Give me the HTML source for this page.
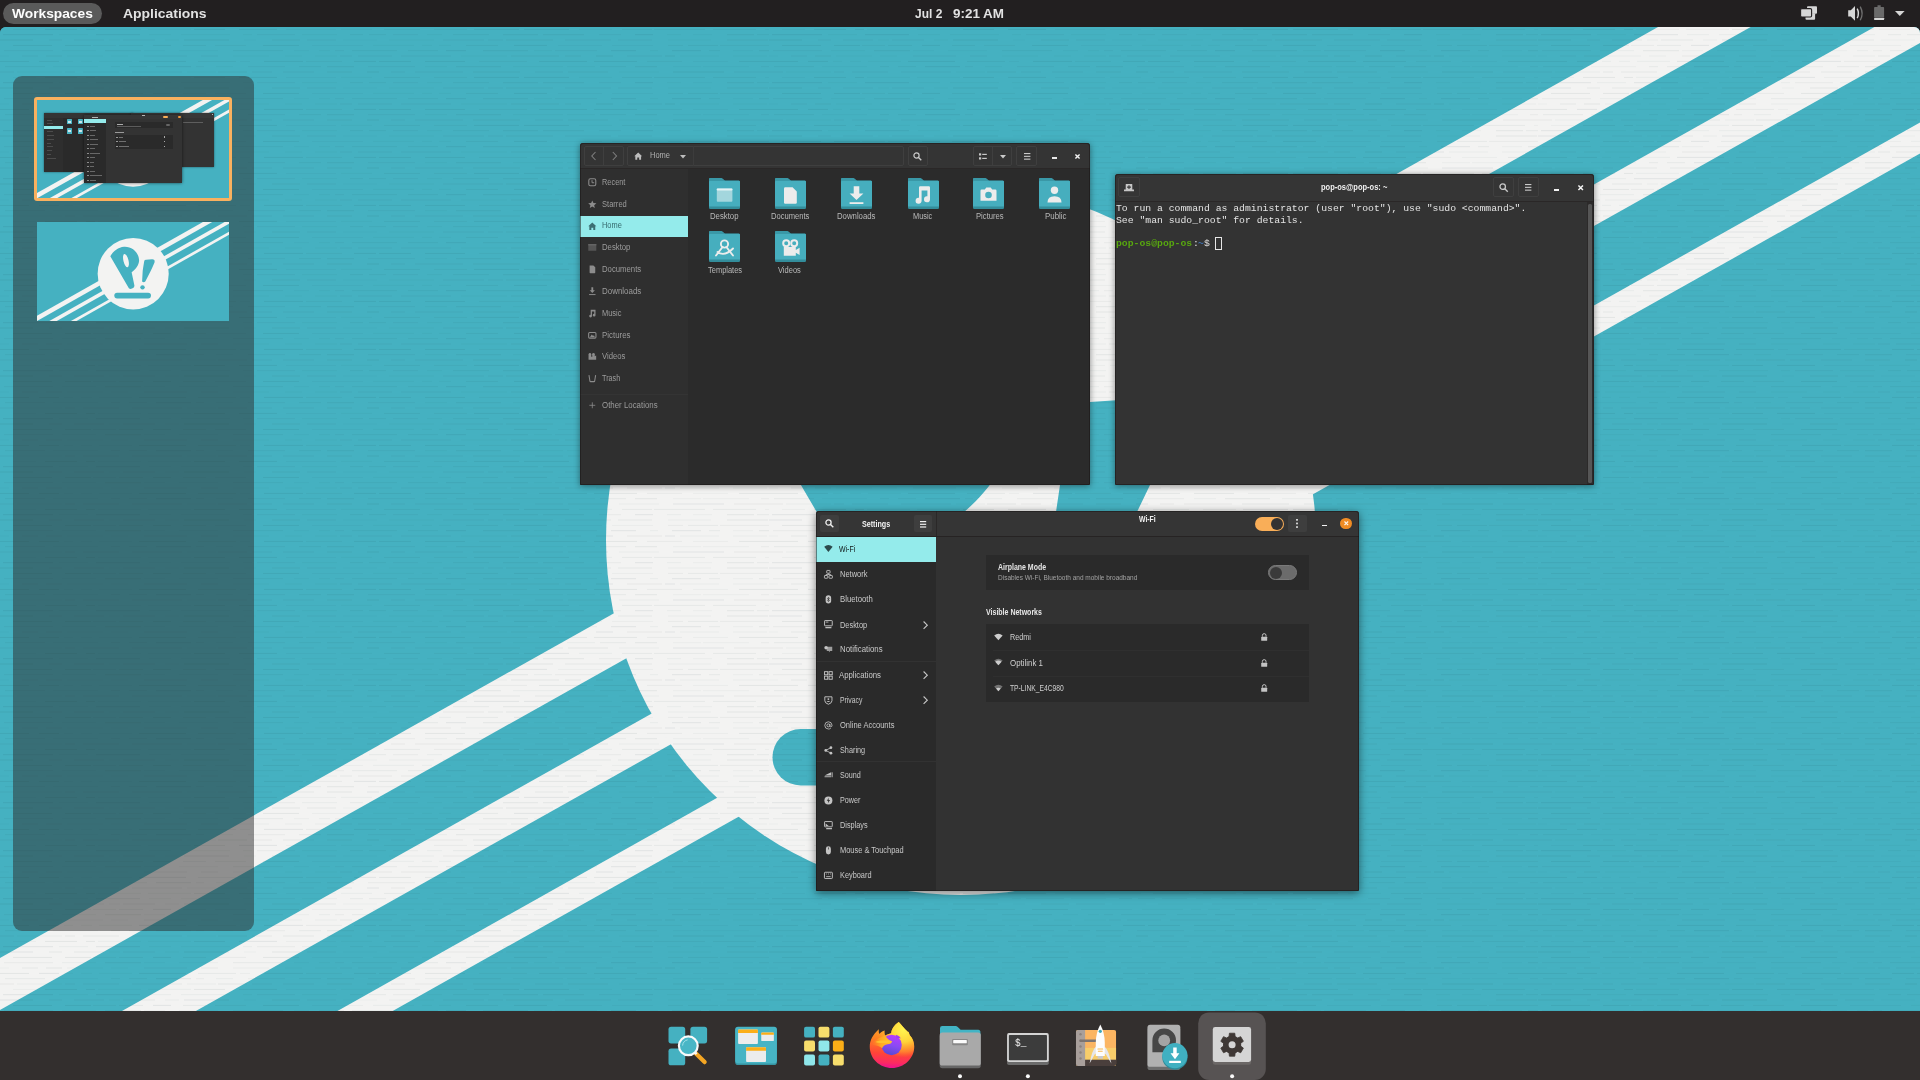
<!DOCTYPE html>
<html lang="en">
<head>
<meta charset="utf-8">
<title>Pop!_OS Workspaces Overview</title>
<style>
*{box-sizing:border-box;margin:0;padding:0}
html,body{width:1920px;height:1080px;overflow:hidden;background:#221f20;font-family:"Liberation Sans",sans-serif}
#root{will-change:transform;position:relative;width:1920px;height:1080px;overflow:hidden;background:#221f20}
.a{position:absolute}
.tx{position:absolute;white-space:pre;line-height:1;transform-origin:0 50%;display:block}
svg{display:block;overflow:visible}
#wall{position:absolute;left:0;top:27px;width:1920px;height:984px;border-radius:6px 6px 0 0;overflow:hidden;background:#45b1c1}
#wall>svg{position:absolute;left:0;top:-27px}
#topbar{position:absolute;left:0;top:0;width:1920px;height:27px}
#dock{position:absolute;left:0;top:1011px;width:1920px;height:69px;background:#332f2e}
.win{position:absolute;border-radius:3px 3px 1px 1px;box-shadow:0 1px 6px rgba(0,0,0,.45)}
.win::after{content:"";position:absolute;left:0;top:0;right:0;bottom:0;border:1px solid rgba(24,20,20,.5);border-radius:3px 3px 1px 1px}
.hb{position:absolute;left:0;top:0;width:100%;background:#343434;border-radius:3px 3px 0 0;border-bottom:1px solid #2a2727}
.btn{position:absolute;border:1px solid #3f3f3f;border-radius:2px}
.m{font-family:"Liberation Mono",monospace}
.b{font-weight:bold}

</style>
</head>
<body>
<div id="root">
<svg width="0" height="0" style="position:absolute">
<defs>
<pattern id="tex" width="769" height="48" patternUnits="userSpaceOnUse"><g fill="#0a2a30"><rect x="4" y="2.2" width="49" height="1" opacity="0.05"/><rect x="62" y="2.2" width="34" height="1" opacity="0.04"/><rect x="105" y="2.2" width="36" height="1" opacity="0.07"/><rect x="144" y="2.2" width="21" height="1" opacity="0.03"/><rect x="179" y="2.2" width="39" height="1" opacity="0.03"/><rect x="233" y="2.2" width="50" height="1" opacity="0.06"/><rect x="294" y="2.2" width="15" height="1" opacity="0.03"/><rect x="319" y="2.2" width="11" height="1" opacity="0.04"/><rect x="335" y="2.2" width="9" height="1" opacity="0.05"/><rect x="352" y="2.2" width="45" height="1" opacity="0.06"/><rect x="408" y="2.2" width="30" height="1" opacity="0.06"/><rect x="446" y="2.2" width="20" height="1" opacity="0.08"/><rect x="483" y="2.2" width="45" height="1" opacity="0.07"/><rect x="534" y="2.2" width="18" height="1" opacity="0.04"/><rect x="555" y="2.2" width="42" height="1" opacity="0.05"/><rect x="611" y="2.2" width="25" height="1" opacity="0.08"/><rect x="650" y="2.2" width="8" height="1" opacity="0.04"/><rect x="672" y="2.2" width="29" height="1" opacity="0.08"/><rect x="709" y="2.2" width="11" height="1" opacity="0.06"/><rect x="733" y="2.2" width="20" height="1" opacity="0.03"/><rect x="759" y="2.2" width="10" height="1" opacity="0.07"/><rect x="-3" y="7.5" width="12" height="1" opacity="0.03"/><rect x="22" y="7.5" width="16" height="1" opacity="0.06"/><rect x="46" y="7.5" width="16" height="1" opacity="0.07"/><rect x="67" y="7.5" width="36" height="1" opacity="0.04"/><rect x="111" y="7.5" width="17" height="1" opacity="0.04"/><rect x="144" y="7.5" width="43" height="1" opacity="0.05"/><rect x="201" y="7.5" width="17" height="1" opacity="0.05"/><rect x="233" y="7.5" width="36" height="1" opacity="0.04"/><rect x="285" y="7.5" width="17" height="1" opacity="0.04"/><rect x="315" y="7.5" width="22" height="1" opacity="0.04"/><rect x="340" y="7.5" width="12" height="1" opacity="0.06"/><rect x="358" y="7.5" width="34" height="1" opacity="0.05"/><rect x="401" y="7.5" width="50" height="1" opacity="0.05"/><rect x="461" y="7.5" width="46" height="1" opacity="0.04"/><rect x="511" y="7.5" width="48" height="1" opacity="0.07"/><rect x="565" y="7.5" width="16" height="1" opacity="0.07"/><rect x="596" y="7.5" width="17" height="1" opacity="0.08"/><rect x="627" y="7.5" width="35" height="1" opacity="0.05"/><rect x="665" y="7.5" width="10" height="1" opacity="0.08"/><rect x="680" y="7.5" width="39" height="1" opacity="0.04"/><rect x="733" y="7.5" width="34" height="1" opacity="0.04"/><rect x="-4" y="12.9" width="33" height="1" opacity="0.07"/><rect x="39" y="12.9" width="20" height="1" opacity="0.08"/><rect x="64" y="12.9" width="9" height="1" opacity="0.04"/><rect x="81" y="12.9" width="11" height="1" opacity="0.04"/><rect x="99" y="12.9" width="33" height="1" opacity="0.04"/><rect x="139" y="12.9" width="47" height="1" opacity="0.08"/><rect x="198" y="12.9" width="38" height="1" opacity="0.06"/><rect x="240" y="12.9" width="10" height="1" opacity="0.03"/><rect x="264" y="12.9" width="39" height="1" opacity="0.08"/><rect x="306" y="12.9" width="36" height="1" opacity="0.05"/><rect x="354" y="12.9" width="22" height="1" opacity="0.08"/><rect x="379" y="12.9" width="32" height="1" opacity="0.07"/><rect x="425" y="12.9" width="40" height="1" opacity="0.07"/><rect x="479" y="12.9" width="48" height="1" opacity="0.05"/><rect x="539" y="12.9" width="48" height="1" opacity="0.07"/><rect x="594" y="12.9" width="43" height="1" opacity="0.07"/><rect x="647" y="12.9" width="35" height="1" opacity="0.05"/><rect x="693" y="12.9" width="35" height="1" opacity="0.03"/><rect x="739" y="12.9" width="30" height="1" opacity="0.07"/><rect x="5" y="18.2" width="40" height="1" opacity="0.06"/><rect x="53" y="18.2" width="45" height="1" opacity="0.03"/><rect x="111" y="18.2" width="9" height="1" opacity="0.06"/><rect x="129" y="18.2" width="18" height="1" opacity="0.06"/><rect x="156" y="18.2" width="35" height="1" opacity="0.08"/><rect x="196" y="18.2" width="8" height="1" opacity="0.05"/><rect x="216" y="18.2" width="17" height="1" opacity="0.04"/><rect x="248" y="18.2" width="37" height="1" opacity="0.05"/><rect x="299" y="18.2" width="22" height="1" opacity="0.06"/><rect x="327" y="18.2" width="27" height="1" opacity="0.07"/><rect x="368" y="18.2" width="47" height="1" opacity="0.05"/><rect x="425" y="18.2" width="22" height="1" opacity="0.04"/><rect x="456" y="18.2" width="45" height="1" opacity="0.07"/><rect x="513" y="18.2" width="50" height="1" opacity="0.04"/><rect x="567" y="18.2" width="28" height="1" opacity="0.04"/><rect x="600" y="18.2" width="26" height="1" opacity="0.06"/><rect x="635" y="18.2" width="22" height="1" opacity="0.07"/><rect x="673" y="18.2" width="28" height="1" opacity="0.03"/><rect x="703" y="18.2" width="46" height="1" opacity="0.03"/><rect x="761" y="18.2" width="8" height="1" opacity="0.05"/><rect x="0" y="23.5" width="14" height="1" opacity="0.05"/><rect x="17" y="23.5" width="45" height="1" opacity="0.04"/><rect x="65" y="23.5" width="10" height="1" opacity="0.06"/><rect x="83" y="23.5" width="36" height="1" opacity="0.06"/><rect x="132" y="23.5" width="50" height="1" opacity="0.06"/><rect x="187" y="23.5" width="29" height="1" opacity="0.04"/><rect x="218" y="23.5" width="29" height="1" opacity="0.07"/><rect x="252" y="23.5" width="20" height="1" opacity="0.05"/><rect x="283" y="23.5" width="31" height="1" opacity="0.06"/><rect x="327" y="23.5" width="25" height="1" opacity="0.07"/><rect x="367" y="23.5" width="12" height="1" opacity="0.08"/><rect x="391" y="23.5" width="14" height="1" opacity="0.05"/><rect x="415" y="23.5" width="48" height="1" opacity="0.05"/><rect x="473" y="23.5" width="47" height="1" opacity="0.07"/><rect x="535" y="23.5" width="28" height="1" opacity="0.06"/><rect x="568" y="23.5" width="40" height="1" opacity="0.07"/><rect x="619" y="23.5" width="40" height="1" opacity="0.04"/><rect x="673" y="23.5" width="51" height="1" opacity="0.08"/><rect x="734" y="23.5" width="35" height="1" opacity="0.05"/><rect x="13" y="28.9" width="23" height="1" opacity="0.03"/><rect x="45" y="28.9" width="32" height="1" opacity="0.07"/><rect x="86" y="28.9" width="9" height="1" opacity="0.07"/><rect x="98" y="28.9" width="43" height="1" opacity="0.04"/><rect x="148" y="28.9" width="43" height="1" opacity="0.04"/><rect x="194" y="28.9" width="31" height="1" opacity="0.07"/><rect x="239" y="28.9" width="38" height="1" opacity="0.08"/><rect x="286" y="28.9" width="50" height="1" opacity="0.03"/><rect x="341" y="28.9" width="31" height="1" opacity="0.04"/><rect x="384" y="28.9" width="36" height="1" opacity="0.06"/><rect x="434" y="28.9" width="33" height="1" opacity="0.05"/><rect x="474" y="28.9" width="45" height="1" opacity="0.08"/><rect x="524" y="28.9" width="45" height="1" opacity="0.08"/><rect x="579" y="28.9" width="33" height="1" opacity="0.04"/><rect x="622" y="28.9" width="30" height="1" opacity="0.06"/><rect x="654" y="28.9" width="51" height="1" opacity="0.06"/><rect x="713" y="28.9" width="43" height="1" opacity="0.06"/><rect x="765" y="28.9" width="4" height="1" opacity="0.03"/><rect x="3" y="34.2" width="50" height="1" opacity="0.08"/><rect x="59" y="34.2" width="29" height="1" opacity="0.04"/><rect x="96" y="34.2" width="44" height="1" opacity="0.08"/><rect x="149" y="34.2" width="22" height="1" opacity="0.04"/><rect x="181" y="34.2" width="49" height="1" opacity="0.04"/><rect x="243" y="34.2" width="9" height="1" opacity="0.04"/><rect x="257" y="34.2" width="38" height="1" opacity="0.05"/><rect x="302" y="34.2" width="35" height="1" opacity="0.04"/><rect x="350" y="34.2" width="13" height="1" opacity="0.06"/><rect x="369" y="34.2" width="17" height="1" opacity="0.06"/><rect x="393" y="34.2" width="25" height="1" opacity="0.05"/><rect x="427" y="34.2" width="15" height="1" opacity="0.04"/><rect x="453" y="34.2" width="36" height="1" opacity="0.06"/><rect x="503" y="34.2" width="35" height="1" opacity="0.07"/><rect x="543" y="34.2" width="41" height="1" opacity="0.07"/><rect x="599" y="34.2" width="22" height="1" opacity="0.05"/><rect x="635" y="34.2" width="18" height="1" opacity="0.08"/><rect x="667" y="34.2" width="14" height="1" opacity="0.04"/><rect x="693" y="34.2" width="19" height="1" opacity="0.03"/><rect x="727" y="34.2" width="27" height="1" opacity="0.07"/><rect x="757" y="34.2" width="12" height="1" opacity="0.06"/><rect x="-5" y="39.5" width="38" height="1" opacity="0.08"/><rect x="49" y="39.5" width="13" height="1" opacity="0.06"/><rect x="74" y="39.5" width="30" height="1" opacity="0.06"/><rect x="109" y="39.5" width="11" height="1" opacity="0.04"/><rect x="123" y="39.5" width="32" height="1" opacity="0.06"/><rect x="165" y="39.5" width="14" height="1" opacity="0.04"/><rect x="184" y="39.5" width="45" height="1" opacity="0.08"/><rect x="244" y="39.5" width="12" height="1" opacity="0.03"/><rect x="272" y="39.5" width="28" height="1" opacity="0.07"/><rect x="307" y="39.5" width="29" height="1" opacity="0.06"/><rect x="343" y="39.5" width="34" height="1" opacity="0.03"/><rect x="389" y="39.5" width="45" height="1" opacity="0.04"/><rect x="443" y="39.5" width="41" height="1" opacity="0.05"/><rect x="488" y="39.5" width="15" height="1" opacity="0.06"/><rect x="506" y="39.5" width="47" height="1" opacity="0.07"/><rect x="565" y="39.5" width="46" height="1" opacity="0.06"/><rect x="618" y="39.5" width="34" height="1" opacity="0.06"/><rect x="668" y="39.5" width="43" height="1" opacity="0.04"/><rect x="727" y="39.5" width="41" height="1" opacity="0.07"/><rect x="13" y="44.9" width="39" height="1" opacity="0.07"/><rect x="65" y="44.9" width="26" height="1" opacity="0.07"/><rect x="93" y="44.9" width="23" height="1" opacity="0.05"/><rect x="119" y="44.9" width="24" height="1" opacity="0.06"/><rect x="153" y="44.9" width="18" height="1" opacity="0.08"/><rect x="183" y="44.9" width="23" height="1" opacity="0.06"/><rect x="215" y="44.9" width="31" height="1" opacity="0.05"/><rect x="263" y="44.9" width="36" height="1" opacity="0.07"/><rect x="312" y="44.9" width="51" height="1" opacity="0.03"/><rect x="373" y="44.9" width="41" height="1" opacity="0.04"/><rect x="422" y="44.9" width="10" height="1" opacity="0.04"/><rect x="439" y="44.9" width="12" height="1" opacity="0.04"/><rect x="466" y="44.9" width="32" height="1" opacity="0.06"/><rect x="514" y="44.9" width="33" height="1" opacity="0.08"/><rect x="558" y="44.9" width="44" height="1" opacity="0.03"/><rect x="612" y="44.9" width="41" height="1" opacity="0.03"/><rect x="668" y="44.9" width="15" height="1" opacity="0.05"/><rect x="688" y="44.9" width="30" height="1" opacity="0.06"/><rect x="720" y="44.9" width="49" height="1" opacity="0.05"/></g></pattern>
<symbol id="wp" viewBox="0 0 1920 1080" preserveAspectRatio="none">
<rect x="0" y="0" width="1920" height="1080" fill="#45b1c1"/>
<g fill="#f3f3f2">
<polygon points="-20.0,969.2 1940.0,-131.3 1940.0,-79.3 -20.0,1021.2"/>
<polygon points="-20.0,1090.7 1940.0,-9.8 1940.0,31.7 -20.0,1132.2"/>
<polygon points="-20.0,1211.7 1940.0,111.2 1940.0,142.2 -20.0,1242.7"/>
<circle cx="961" cy="540" r="355"/>
</g>
<g fill="#45b1c1">
<g transform="translate(961,540) scale(1.2034) translate(-938,-570)">
<path d="M748,427 C770,385 815,352 862,348 C930,344 985,395 987,462 C986,500 955,540 925,558 L948,668 C951,690 915,705 902,690 Z"/>
<ellipse cx="878" cy="462" rx="21" ry="56" transform="rotate(-14 878 462)" fill="#f3f3f2"/>
</g>
<path d="M1071,416 Q1073,402 1090,402 L1150,398 Q1182,398 1174,428 L1150,485 L1137,512 L1082,618 Q1066,634 1050,618 L1056,512 L1060,485 Z"/>
<circle cx="1054" cy="676" r="22"/>
<rect x="772.5" y="729" width="366" height="56.5" rx="28.25"/>
</g>
</symbol>
</defs>
</svg>
<div id="wall"><svg width="1920" height="1080" viewBox="0 0 1920 1080"><use href="#wp" x="0" y="0" width="1920" height="1080"/><rect x="0" y="0" width="1920" height="1080" fill="url(#tex)"/></svg></div>
<div id="topbar">
<div class="a" style="left:3px;top:3px;width:99px;height:21px;border-radius:10.5px;background:#5a5a5a"></div>
<span class="tx b" id="t0" style="left:12.00px;top:7px;font-size:13.6px;color:#fdfdfd;transform:scaleX(1.0120);">Workspaces</span>
<span class="tx b" id="t1" style="left:123.20px;top:7px;font-size:13.6px;color:#e2e2e2;transform:scaleX(1.0248);">Applications</span>
<span class="tx b" id="t2" style="left:914.80px;top:7px;font-size:13.6px;color:#e2e2e2;transform:scaleX(0.8811);">Jul 2</span>
<span class="tx b" id="t3" style="left:953.20px;top:7px;font-size:13.6px;color:#e2e2e2;transform:scaleX(0.9879);">9:21 AM</span>
<svg class="a" style="left:1800px;top:4px" width="110" height="20" viewBox="0 0 110 20">
<g fill="#d6d6d6">
<!-- screens -->
<rect x="7" y="2.2" width="10" height="7.6" rx="1"/>
<rect x="5.5" y="9.2" width="9.6" height="6.6" rx="1"/>
<rect x="0.6" y="4.6" width="11" height="8.4" rx="1.2" stroke="#221f20" stroke-width="1.1"/>
<!-- speaker -->
<path d="M48.2,6.3 h2.6 l4.2,-4.3 v14.8 l-4.2,-4.3 h-2.6 z"/>
<path d="M56.6,5 q2.2,4.4 0,8.8 l1.2,0.7 q2.7,-5.1 0,-10.2 z"/>
<path d="M59.6,2.9 q3.6,6.5 0,13 l1.2,0.7 q4.1,-7.2 0,-14.4 z" fill="#6f6f6f"/>
<!-- battery -->
<path d="M77.5,1.3 h3.2 v1.6 h2.6 q0.8,0 0.8,0.8 v9.6 h-10 v-9.6 q0,-0.8 0.8,-0.8 h2.6 z" fill="#6a6a6a"/>
<rect x="74.100" y="13.800" width="10" height="2.200" rx="0.4"/>
<!-- arrow -->
<path d="M95,7 h9.600 l-4.800,5 z"/>
</g>
</svg>
</div>
<div class="a" style="left:12.5px;top:75.5px;width:241px;height:855px;border-radius:9px;background:rgba(43,43,43,.5)"></div>
<div class="a" style="left:34px;top:97px;width:198px;height:104px;border-radius:3px;background:#f9b15f"></div>
<div class="a" style="left:37px;top:100px;width:192px;height:98.400px;overflow:hidden"><svg class="a" style="left:0px;top:0px" width="192" height="98.4" viewBox="0 27 1920 984" preserveAspectRatio="none"><use href="#wp" x="0" y="0" width="1920" height="1080"/></svg></div>
<div class="a" style="left:0;top:0;width:260px;height:210px"><div class="a" style="left:44.1px;top:113.0px;width:89.1px;height:59.3px;background:#2a2a2a;box-shadow:0 0 2px rgba(0,0,0,.5)"></div><div class="a" style="left:44.1px;top:113.0px;width:89.1px;height:4.6px;background:#343434;"></div><div class="a" style="left:44.1px;top:117.6px;width:18.9px;height:54.7px;background:#2e2e2e;"></div><div class="a" style="left:44.1px;top:125.7px;width:18.9px;height:3.3px;background:#94ebeb;"></div><div class="a" style="left:66.6px;top:119.2px;width:5.4px;height:5.3px;background:#49b3c3;border-radius:0.5px"></div><div class="a" style="left:68.0px;top:120.8px;width:2.6px;height:2.6px;background:#cfe9ed;"></div><div class="a" style="left:66.6px;top:128.3px;width:5.4px;height:5.3px;background:#49b3c3;border-radius:0.5px"></div><div class="a" style="left:68.0px;top:129.9px;width:2.6px;height:2.6px;background:#cfe9ed;"></div><div class="a" style="left:78.0px;top:119.2px;width:5.4px;height:5.3px;background:#49b3c3;border-radius:0.5px"></div><div class="a" style="left:79.4px;top:120.8px;width:2.6px;height:2.6px;background:#cfe9ed;"></div><div class="a" style="left:78.0px;top:128.3px;width:5.4px;height:5.3px;background:#49b3c3;border-radius:0.5px"></div><div class="a" style="left:79.4px;top:129.9px;width:2.6px;height:2.6px;background:#cfe9ed;"></div><div class="a" style="left:47.0px;top:119.6px;width:5.0px;height:0.9px;background:#4c4c4c;"></div><div class="a" style="left:47.0px;top:123.4px;width:5.5px;height:0.9px;background:#4c4c4c;"></div><div class="a" style="left:47.0px;top:131.2px;width:6.0px;height:0.9px;background:#4c4c4c;"></div><div class="a" style="left:47.0px;top:135.0px;width:7.0px;height:0.9px;background:#4c4c4c;"></div><div class="a" style="left:47.0px;top:138.8px;width:7.0px;height:0.9px;background:#4c4c4c;"></div><div class="a" style="left:47.0px;top:142.6px;width:4.0px;height:0.9px;background:#4c4c4c;"></div><div class="a" style="left:47.0px;top:146.4px;width:5.5px;height:0.9px;background:#4c4c4c;"></div><div class="a" style="left:47.0px;top:150.2px;width:5.0px;height:0.9px;background:#4c4c4c;"></div><div class="a" style="left:47.0px;top:154.0px;width:4.0px;height:0.9px;background:#4c4c4c;"></div><div class="a" style="left:47.0px;top:158.4px;width:9.0px;height:0.9px;background:#4c4c4c;"></div><div class="a" style="left:130.8px;top:113.0px;width:83.6px;height:54.0px;background:#333;box-shadow:0 0 2px rgba(0,0,0,.5)"></div><div class="a" style="left:130.8px;top:113.0px;width:83.6px;height:4.8px;background:#383838;"></div><div class="a" style="left:183.0px;top:121.8px;width:20.0px;height:1.0px;background:#5e5e5e;"></div><div class="a" style="left:211.5px;top:113.5px;width:0.8px;height:1.1px;background:#bbb;"></div><div class="a" style="left:84.2px;top:114.9px;width:97.8px;height:67.8px;background:#333;box-shadow:0 0 3px rgba(0,0,0,.6)"></div><div class="a" style="left:84.2px;top:114.9px;width:97.8px;height:4.4px;background:#363636;"></div><div class="a" style="left:84.2px;top:119.3px;width:21.6px;height:63.4px;background:#2a2a2a;"></div><div class="a" style="left:84.2px;top:119.3px;width:21.6px;height:4.2px;background:#94ebeb;"></div><div class="a" style="left:92.0px;top:116.6px;width:5.5px;height:1.1px;background:#b5b5b5;"></div><div class="a" style="left:141.5px;top:115.3px;width:3.5px;height:1.0px;background:#b5b5b5;"></div><div class="a" style="left:163.4px;top:115.7px;width:5.0px;height:2.6px;background:#f9ae58;border-radius:1.3px"></div><div class="a" style="left:178.4px;top:115.6px;width:2.6px;height:2.6px;background:#f39b3c;border-radius:1.3px"></div><div class="a" style="left:114.8px;top:122.1px;width:58.0px;height:6.2px;background:#2a2a2a;"></div><div class="a" style="left:116.8px;top:124.0px;width:6.7px;height:1.0px;background:#aaa;"></div><div class="a" style="left:116.8px;top:126.0px;width:24.2px;height:0.7px;background:#5c5c5c;"></div><div class="a" style="left:166.0px;top:124.0px;width:3.6px;height:2.4px;background:#666;border-radius:1.2px"></div><div class="a" style="left:114.8px;top:132.0px;width:9.7px;height:1.0px;background:#9a9a9a;"></div><div class="a" style="left:114.8px;top:134.7px;width:58.0px;height:14.2px;background:#2a2a2a;"></div><div class="a" style="left:116.4px;top:136.6px;width:1.6px;height:1.0px;background:#999;"></div><div class="a" style="left:119.4px;top:136.6px;width:4.0px;height:1.0px;background:#707070;"></div><div class="a" style="left:164.0px;top:136.4px;width:1.4px;height:1.4px;background:#aaa;"></div><div class="a" style="left:116.4px;top:141.2px;width:1.6px;height:1.0px;background:#999;"></div><div class="a" style="left:119.4px;top:141.2px;width:6.5px;height:1.0px;background:#707070;"></div><div class="a" style="left:164.0px;top:141.0px;width:1.4px;height:1.4px;background:#aaa;"></div><div class="a" style="left:116.4px;top:145.8px;width:1.6px;height:1.0px;background:#999;"></div><div class="a" style="left:119.4px;top:145.8px;width:10.0px;height:1.0px;background:#707070;"></div><div class="a" style="left:164.0px;top:145.6px;width:1.4px;height:1.4px;background:#aaa;"></div><div class="a" style="left:87.3px;top:125.5px;width:1.5px;height:1.2px;background:#8c8c8c;"></div><div class="a" style="left:90.0px;top:125.5px;width:5.0px;height:1.1px;background:#686868;"></div><div class="a" style="left:87.3px;top:130.0px;width:1.5px;height:1.2px;background:#8c8c8c;"></div><div class="a" style="left:90.0px;top:130.0px;width:6.0px;height:1.1px;background:#686868;"></div><div class="a" style="left:87.3px;top:134.5px;width:1.5px;height:1.2px;background:#8c8c8c;"></div><div class="a" style="left:90.0px;top:134.5px;width:5.0px;height:1.1px;background:#686868;"></div><div class="a" style="left:87.3px;top:139.0px;width:1.5px;height:1.2px;background:#8c8c8c;"></div><div class="a" style="left:90.0px;top:139.0px;width:8.0px;height:1.1px;background:#686868;"></div><div class="a" style="left:87.3px;top:143.5px;width:1.5px;height:1.2px;background:#8c8c8c;"></div><div class="a" style="left:90.0px;top:143.5px;width:8.0px;height:1.1px;background:#686868;"></div><div class="a" style="left:87.3px;top:148.0px;width:1.5px;height:1.2px;background:#8c8c8c;"></div><div class="a" style="left:90.0px;top:148.0px;width:4.5px;height:1.1px;background:#686868;"></div><div class="a" style="left:87.3px;top:152.5px;width:1.5px;height:1.2px;background:#8c8c8c;"></div><div class="a" style="left:90.0px;top:152.5px;width:10.0px;height:1.1px;background:#686868;"></div><div class="a" style="left:87.3px;top:157.0px;width:1.5px;height:1.2px;background:#8c8c8c;"></div><div class="a" style="left:90.0px;top:157.0px;width:5.0px;height:1.1px;background:#686868;"></div><div class="a" style="left:87.3px;top:161.5px;width:1.5px;height:1.2px;background:#8c8c8c;"></div><div class="a" style="left:90.0px;top:161.5px;width:4.0px;height:1.1px;background:#686868;"></div><div class="a" style="left:87.3px;top:166.0px;width:1.5px;height:1.2px;background:#8c8c8c;"></div><div class="a" style="left:90.0px;top:166.0px;width:4.0px;height:1.1px;background:#686868;"></div><div class="a" style="left:87.3px;top:170.5px;width:1.5px;height:1.2px;background:#8c8c8c;"></div><div class="a" style="left:90.0px;top:170.5px;width:5.0px;height:1.1px;background:#686868;"></div><div class="a" style="left:87.3px;top:175.0px;width:1.5px;height:1.2px;background:#8c8c8c;"></div><div class="a" style="left:90.0px;top:175.0px;width:11.5px;height:1.1px;background:#686868;"></div><div class="a" style="left:87.3px;top:179.5px;width:1.5px;height:1.2px;background:#8c8c8c;"></div><div class="a" style="left:90.0px;top:179.5px;width:6.0px;height:1.1px;background:#686868;"></div></div>
<div class="a" style="left:36.800px;top:221.800px;width:192.200px;height:99.100px;overflow:hidden"><svg class="a" style="left:0px;top:0px" width="192.2" height="99.1" viewBox="0 27 1920 984" preserveAspectRatio="none"><use href="#wp" x="0" y="0" width="1920" height="1080"/></svg></div>
<div class="win" id="files" style="left:580px;top:143px;width:510.400px;height:342.200px;background:#2b2b2b">
<div class="hb" style="height:25.800px"></div>
<div class="btn" style="left:3.6px;top:3.300px;width:40.400px;height:19.500px"></div>
<div class="a" style="left:23.3px;top:3.300px;width:1px;height:19.500px;background:#3f3f3f"></div>
<svg class="a" style="left:9.0px;top:8px" width="30" height="10" viewBox="0 0 30 10"><path d="M6.500,1 L2.800,5 L6.500,9 M23.800,1 L27.500,5 L23.800,9" fill="none" stroke="#7e7e7e" stroke-width="1.100"/></svg>
<div class="btn" style="left:47.2px;top:3.300px;width:276.500px;height:19.500px"></div>
<div class="a" style="left:112.5px;top:3.300px;width:1px;height:19.500px;background:#3c3c3c"></div>
<svg class="a" style="left:53.60px;top:8.80px" width="8.4" height="8.4" viewBox="0 0 16 16"><path d="M8,1 L15.500,8 H13.500 V15 H9.800 V10.500 H6.200 V15 H2.500 V8 H0.500 Z" fill="#bdbdbd"/></svg>
<span class="tx" id="t23" style="left:70.10px;top:8px;font-size:8.3px;color:#b2b2b2;transform:scaleX(0.9033);">Home</span>
<svg class="a" style="left:100.0px;top:12.0px" width="6" height="3.500" viewBox="0 0 6 3.500"><path d="M0,0 H6 L3,3.500 Z" fill="#bdbdbd"/></svg>
<div class="btn" style="left:327.5px;top:3.300px;width:20.200px;height:19.500px"></div>
<svg class="a" style="left:332.6px;top:8.6px" width="9" height="9" viewBox="0 0 9 9"><circle cx="3.500" cy="3.500" r="2.600" fill="none" stroke="#c9c9c9" stroke-width="1.200"/><path d="M5.500,5.500 L8.300,8.300" stroke="#c9c9c9" stroke-width="1.300"/></svg>
<div class="btn" style="left:393.1px;top:3.300px;width:39.400px;height:19.500px"></div>
<div class="a" style="left:412.4px;top:3.300px;width:1px;height:19.500px;background:#3f3f3f"></div>
<svg class="a" style="left:398.8px;top:9.8px" width="8" height="7" viewBox="0 0 8 7"><g fill="#c9c9c9"><rect x="0" y="0.300" width="2.200" height="2.200"/><rect x="3.200" y="0.800" width="4.600" height="1.200"/><rect x="0" y="4.300" width="2.200" height="2.200"/><rect x="3.200" y="4.800" width="4.600" height="1.200"/></g></svg>
<svg class="a" style="left:419.8px;top:12.0px" width="6" height="3.500" viewBox="0 0 6 3.500"><path d="M0,0 H6 L3,3.500 Z" fill="#c9c9c9"/></svg>
<div class="btn" style="left:436.3px;top:3.300px;width:20.300px;height:19.500px"></div>
<svg class="a" style="left:443.6px;top:9.9px" width="6.400" height="7" viewBox="0 0 6.400 7"><g fill="#c9c9c9"><rect x="0" y="0" width="6.400" height="1.100"/><rect x="0" y="2.800" width="6.400" height="1.100"/><rect x="0" y="5.600" width="6.400" height="1.100"/></g></svg>
<div class="a" style="left:471.9px;top:13.7px;width:4.800px;height:2px;background:#e8e8e8"></div>
<svg class="a" style="left:494.7px;top:11.0px" width="5" height="5" viewBox="0 0 5 5"><path d="M0.400,0.400 L4.600,4.600 M4.600,0.400 L0.400,4.600" stroke="#f2f2f2" stroke-width="1.400"/></svg>

<div class="a" style="left:0;top:25.800px;width:108px;height:316.400px;background:#2f2f2f;border-radius:0 0 0 1px"></div>
<div class="a" style="left:0;top:251.0px;width:108px;height:1px;background:#343434"></div>
<svg class="a" style="left:8.30px;top:35.10px" width="8.6" height="8.6" viewBox="0 0 16 16"><rect x="1.500" y="1.500" width="13" height="13" rx="3" fill="none" stroke="#8c8c8c" stroke-width="2"/><path d="M7.500,4 v4.800 h4" fill="none" stroke="#8c8c8c" stroke-width="1.800"/></svg><span class="tx" id="t4" style="left:21.80px;top:35px;font-size:8.3px;color:#9c9c9c;transform:scaleX(0.8898);">Recent</span><svg class="a" style="left:8.30px;top:56.80px" width="8.6" height="8.6" viewBox="0 0 16 16"><path d="M8,0.800 L10.200,5.700 L15.600,6.200 L11.500,9.800 L12.700,15.100 L8,12.300 L3.300,15.100 L4.500,9.800 L0.400,6.200 L5.800,5.700 Z" fill="#8c8c8c"/></svg><span class="tx" id="t5" style="left:21.80px;top:57px;font-size:8.3px;color:#9c9c9c;transform:scaleX(0.9111);">Starred</span><div class="a" style="left:0;top:73.0px;width:108px;height:21.200px;background:#94ebeb"></div><svg class="a" style="left:8.30px;top:78.50px" width="8.6" height="8.6" viewBox="0 0 16 16"><path d="M8,1 L15.500,8 H13.500 V15 H9.800 V10.500 H6.200 V15 H2.500 V8 H0.500 Z" fill="#3c6f73"/></svg><span class="tx" id="t6" style="left:21.80px;top:78px;font-size:8.3px;color:#34686c;transform:scaleX(0.8943);">Home</span><svg class="a" style="left:8.30px;top:100.20px" width="8.6" height="8.6" viewBox="0 0 16 16"><rect x="0.500" y="2" width="15" height="12.500" rx="1" fill="#555"/><rect x="0.500" y="2" width="15" height="2.500" fill="#666"/></svg><span class="tx" id="t7" style="left:21.80px;top:100px;font-size:8.3px;color:#9c9c9c;transform:scaleX(0.9331);">Desktop</span><svg class="a" style="left:8.30px;top:121.90px" width="8.6" height="8.6" viewBox="0 0 16 16"><path d="M3,0.800 H10 L13.500,4.300 V14 Q13.500,15.200 12.300,15.200 H4.200 Q3,15.200 3,14 Z" fill="#8c8c8c"/></svg><span class="tx" id="t8" style="left:21.80px;top:122px;font-size:8.3px;color:#9c9c9c;transform:scaleX(0.9340);">Documents</span><svg class="a" style="left:8.30px;top:143.80px" width="8.6" height="8.6" viewBox="0 0 16 16"><path d="M6.300,0.500 H9.700 V6 H12.800 L8,11 L3.200,6 H6.300 Z" fill="#8c8c8c"/><rect x="2" y="13.200" width="12" height="1.800" fill="#8c8c8c"/></svg><span class="tx" id="t9" style="left:21.80px;top:144px;font-size:8.3px;color:#9c9c9c;transform:scaleX(0.9571);">Downloads</span><svg class="a" style="left:8.30px;top:166.40px" width="8.6" height="8.6" viewBox="0 0 16 16"><path d="M5,1.500 H14 V11.500 A2.600,2.600 0 1 1 11.600,9 V4.500 H7.400 V13 A2.600,2.600 0 1 1 5,10.500 Z" fill="#8c8c8c"/></svg><span class="tx" id="t10" style="left:21.80px;top:166px;font-size:8.3px;color:#9c9c9c;transform:scaleX(0.8952);">Music</span><svg class="a" style="left:8.30px;top:187.90px" width="8.6" height="8.6" viewBox="0 0 16 16"><rect x="1.200" y="2.700" width="13.600" height="10.600" rx="2" fill="none" stroke="#8c8c8c" stroke-width="2"/><path d="M3.500,11.500 L7,6.500 L9.500,9.500 L11,8 L12.800,11.500 Z" fill="#8c8c8c"/></svg><span class="tx" id="t11" style="left:21.80px;top:188px;font-size:8.3px;color:#9c9c9c;transform:scaleX(0.9505);">Pictures</span><svg class="a" style="left:8.30px;top:209.10px" width="8.6" height="8.6" viewBox="0 0 16 16"><path d="M1,5 H6 V9 H8 V5 H12.500 V8 L15.200,6.500 V14.500 H1 Z" fill="#8c8c8c"/><circle cx="3.600" cy="4.300" r="2.400" fill="#8c8c8c"/><circle cx="10.200" cy="4.300" r="2.400" fill="#8c8c8c"/></svg><span class="tx" id="t12" style="left:21.80px;top:209px;font-size:8.3px;color:#9c9c9c;transform:scaleX(0.9279);">Videos</span><svg class="a" style="left:8.30px;top:230.90px" width="8.6" height="8.6" viewBox="0 0 16 16"><path d="M1.800,2 L3.600,13.200 Q3.800,14.200 4.800,14.200 H11.200 Q12.200,14.200 12.400,13.200 L14.200,2" fill="none" stroke="#8c8c8c" stroke-width="1.900"/></svg><span class="tx" id="t13" style="left:21.80px;top:231px;font-size:8.3px;color:#9c9c9c;transform:scaleX(0.8753);">Trash</span><svg class="a" style="left:8.30px;top:258.10px" width="8.6" height="8.6" viewBox="0 0 16 16"><path d="M8,2.500 V13.500 M2.500,8 H13.500" stroke="#8c8c8c" stroke-width="1.500" fill="none"/></svg><span class="tx" id="t14" style="left:21.80px;top:258px;font-size:8.3px;color:#9c9c9c;transform:scaleX(0.9492);">Other Locations</span>
<svg class="a" style="left:129.00px;top:34.90px" width="31" height="31" viewBox="0 0 31 31">
<path d="M0,1 Q0,0 1,0 H12 Q13,0 13.800,0.700 L16,2.800 H30 Q31,2.800 31,3.800 V10 H0 Z" fill="#3a98a7"/>
<rect x="0" y="2.800" width="31" height="28.200" rx="1.200" fill="#338d9b"/>
<path d="M0,4 Q0,2.800 1.200,2.800 H29.800 Q31,2.800 31,4 V28.400 H0 Z" fill="#46aebe"/>
<path d="M0,4 Q0,2.800 1.200,2.800 H12 L13.800,0.700 V2.800 Z" fill="#3a98a7" opacity="0"/>
<path d="M0.300,0.300 H12.600 L15.600,2.900 H0.300 Z" fill="#3a98a7"/>
<rect x="7.800" y="10.400" width="15.600" height="13.300" rx="0.800" fill="#a3d6dd"/><rect x="7.800" y="10.400" width="15.600" height="2" rx="0.600" fill="#e4f3f5"/>
</svg><span class="tx" id="t15" style="left:129.70px;top:69px;font-size:8.3px;color:#b9b9b9;transform:scaleX(0.9363);">Desktop</span><svg class="a" style="left:195.10px;top:34.90px" width="31" height="31" viewBox="0 0 31 31">
<path d="M0,1 Q0,0 1,0 H12 Q13,0 13.800,0.700 L16,2.800 H30 Q31,2.800 31,3.800 V10 H0 Z" fill="#3a98a7"/>
<rect x="0" y="2.800" width="31" height="28.200" rx="1.200" fill="#338d9b"/>
<path d="M0,4 Q0,2.800 1.200,2.800 H29.800 Q31,2.800 31,4 V28.400 H0 Z" fill="#46aebe"/>
<path d="M0,4 Q0,2.800 1.200,2.800 H12 L13.800,0.700 V2.800 Z" fill="#3a98a7" opacity="0"/>
<path d="M0.300,0.300 H12.600 L15.600,2.900 H0.300 Z" fill="#3a98a7"/>
<path d="M9,10.400 Q9,9.200 10.200,9.200 H17.600 L21.800,13.400 V24.600 Q21.800,25.800 20.600,25.800 H10.200 Q9,25.800 9,24.600 Z" fill="#ececec"/>
</svg><span class="tx" id="t16" style="left:190.80px;top:69px;font-size:8.3px;color:#b9b9b9;transform:scaleX(0.9150);">Documents</span><svg class="a" style="left:260.90px;top:34.90px" width="31" height="31" viewBox="0 0 31 31">
<path d="M0,1 Q0,0 1,0 H12 Q13,0 13.800,0.700 L16,2.800 H30 Q31,2.800 31,3.800 V10 H0 Z" fill="#3a98a7"/>
<rect x="0" y="2.800" width="31" height="28.200" rx="1.200" fill="#338d9b"/>
<path d="M0,4 Q0,2.800 1.200,2.800 H29.800 Q31,2.800 31,4 V28.400 H0 Z" fill="#46aebe"/>
<path d="M0,4 Q0,2.800 1.200,2.800 H12 L13.800,0.700 V2.800 Z" fill="#3a98a7" opacity="0"/>
<path d="M0.300,0.300 H12.600 L15.600,2.900 H0.300 Z" fill="#3a98a7"/>
<path d="M12.700,8.300 H18.300 V15.600 H22.400 L15.500,22 L8.600,15.600 H12.700 Z" fill="#ececec"/><rect x="8.600" y="24.200" width="13.800" height="1.800" fill="#ececec"/>
</svg><span class="tx" id="t17" style="left:256.70px;top:69px;font-size:8.3px;color:#b9b9b9;transform:scaleX(0.9376);">Downloads</span><svg class="a" style="left:327.50px;top:34.90px" width="31" height="31" viewBox="0 0 31 31">
<path d="M0,1 Q0,0 1,0 H12 Q13,0 13.800,0.700 L16,2.800 H30 Q31,2.800 31,3.800 V10 H0 Z" fill="#3a98a7"/>
<rect x="0" y="2.800" width="31" height="28.200" rx="1.200" fill="#338d9b"/>
<path d="M0,4 Q0,2.800 1.200,2.800 H29.800 Q31,2.800 31,4 V28.400 H0 Z" fill="#46aebe"/>
<path d="M0,4 Q0,2.800 1.200,2.800 H12 L13.800,0.700 V2.800 Z" fill="#3a98a7" opacity="0"/>
<path d="M0.300,0.300 H12.600 L15.600,2.900 H0.300 Z" fill="#3a98a7"/>
<path d="M11,9.400 Q11,8.200 12.200,8.200 H20.800 Q22,8.200 22,9.400 V21.200 A3,3 0 1 1 19.400,18.300 V12.400 H13.600 V22.600 A3,3 0 1 1 11,19.700 Z" fill="#ececec"/>
</svg><span class="tx" id="t18" style="left:332.50px;top:69px;font-size:8.3px;color:#b9b9b9;transform:scaleX(0.8906);">Music</span><svg class="a" style="left:393.10px;top:34.90px" width="31" height="31" viewBox="0 0 31 31">
<path d="M0,1 Q0,0 1,0 H12 Q13,0 13.800,0.700 L16,2.800 H30 Q31,2.800 31,3.800 V10 H0 Z" fill="#3a98a7"/>
<rect x="0" y="2.800" width="31" height="28.200" rx="1.200" fill="#338d9b"/>
<path d="M0,4 Q0,2.800 1.200,2.800 H29.800 Q31,2.800 31,4 V28.400 H0 Z" fill="#46aebe"/>
<path d="M0,4 Q0,2.800 1.200,2.800 H12 L13.800,0.700 V2.800 Z" fill="#3a98a7" opacity="0"/>
<path d="M0.300,0.300 H12.600 L15.600,2.900 H0.300 Z" fill="#3a98a7"/>
<path d="M7.500,12.800 Q7.500,11.600 8.700,11.600 H11.800 L13.300,9.600 H17.700 L19.200,11.600 H22.300 Q23.500,11.600 23.500,12.800 V22.800 H7.500 Z" fill="#ececec"/><circle cx="15.500" cy="17" r="3.300" fill="#46aebe"/>
</svg><span class="tx" id="t19" style="left:395.60px;top:69px;font-size:8.3px;color:#b9b9b9;transform:scaleX(0.9238);">Pictures</span><svg class="a" style="left:459.30px;top:34.90px" width="31" height="31" viewBox="0 0 31 31">
<path d="M0,1 Q0,0 1,0 H12 Q13,0 13.800,0.700 L16,2.800 H30 Q31,2.800 31,3.800 V10 H0 Z" fill="#3a98a7"/>
<rect x="0" y="2.800" width="31" height="28.200" rx="1.200" fill="#338d9b"/>
<path d="M0,4 Q0,2.800 1.200,2.800 H29.800 Q31,2.800 31,4 V28.400 H0 Z" fill="#46aebe"/>
<path d="M0,4 Q0,2.800 1.200,2.800 H12 L13.800,0.700 V2.800 Z" fill="#3a98a7" opacity="0"/>
<path d="M0.300,0.300 H12.600 L15.600,2.900 H0.300 Z" fill="#3a98a7"/>
<circle cx="15.500" cy="12.200" r="3.700" fill="#ececec"/><path d="M8.500,24.600 Q8.500,18.200 15.500,18.200 Q22.500,18.200 22.500,24.600 Z" fill="#ececec"/>
</svg><span class="tx" id="t20" style="left:464.50px;top:69px;font-size:8.3px;color:#b9b9b9;transform:scaleX(0.9509);">Public</span><svg class="a" style="left:129.00px;top:88.10px" width="31" height="31" viewBox="0 0 31 31">
<path d="M0,1 Q0,0 1,0 H12 Q13,0 13.800,0.700 L16,2.800 H30 Q31,2.800 31,3.800 V10 H0 Z" fill="#3a98a7"/>
<rect x="0" y="2.800" width="31" height="28.200" rx="1.200" fill="#338d9b"/>
<path d="M0,4 Q0,2.800 1.200,2.800 H29.800 Q31,2.800 31,4 V28.400 H0 Z" fill="#46aebe"/>
<path d="M0,4 Q0,2.800 1.200,2.800 H12 L13.800,0.700 V2.800 Z" fill="#3a98a7" opacity="0"/>
<path d="M0.300,0.300 H12.600 L15.600,2.900 H0.300 Z" fill="#3a98a7"/>
<circle cx="15.500" cy="13" r="3.600" fill="none" stroke="#ececec" stroke-width="1.900"/><path d="M13.600,16 L7,24.500 M17.400,16 L24,24.500 M8.500,21 Q15.500,26 24,17.500" fill="none" stroke="#ececec" stroke-width="1.900" stroke-linecap="round"/>
</svg><span class="tx" id="t21" style="left:127.90px;top:123px;font-size:8.3px;color:#b9b9b9;transform:scaleX(0.9014);">Templates</span><svg class="a" style="left:195.10px;top:88.10px" width="31" height="31" viewBox="0 0 31 31">
<path d="M0,1 Q0,0 1,0 H12 Q13,0 13.800,0.700 L16,2.800 H30 Q31,2.800 31,3.800 V10 H0 Z" fill="#3a98a7"/>
<rect x="0" y="2.800" width="31" height="28.200" rx="1.200" fill="#338d9b"/>
<path d="M0,4 Q0,2.800 1.200,2.800 H29.800 Q31,2.800 31,4 V28.400 H0 Z" fill="#46aebe"/>
<path d="M0,4 Q0,2.800 1.200,2.800 H12 L13.800,0.700 V2.800 Z" fill="#3a98a7" opacity="0"/>
<path d="M0.300,0.300 H12.600 L15.600,2.900 H0.300 Z" fill="#3a98a7"/>
<circle cx="11.200" cy="12.200" r="3" fill="none" stroke="#ececec" stroke-width="2"/><circle cx="19.200" cy="12.200" r="3" fill="none" stroke="#ececec" stroke-width="2"/><path d="M8.800,16 H20.800 V19 L24.600,16.800 V24 L20.800,21.800 V24.800 H8.800 Z" fill="#ececec"/>
</svg><span class="tx" id="t22" style="left:198.40px;top:123px;font-size:8.3px;color:#b9b9b9;transform:scaleX(0.9041);">Videos</span>
</div>
<div class="win" id="term" style="left:1115px;top:174px;width:478.800px;height:311.300px;background:#333333;">
<div class="hb" style="height:27.600px;background:#353535"></div>
<div class="btn" style="left:3.3px;top:3px;width:21.300px;height:20.200px"></div>
<svg class="a" style="left:9.2px;top:10.2px" width="10" height="7.200" viewBox="0 0 10 7.200"><path d="M1.700,0.300 Q1.700,0 2,0 H8 Q8.300,0 8.300,0.300 V5.600 H10 V7.200 H0 V5.600 H1.700 Z" fill="#c6c6c6"/><path d="M5,1.200 V5 M3.100,3.100 H6.900" stroke="#353535" stroke-width="1.100"/></svg>
<span class="tx b" id="t30" style="left:205.80px;top:9px;font-size:9px;color:#f0f0f0;transform:scaleX(0.8338);">pop-os@pop-os: ~</span>
<div class="btn" style="left:378.1px;top:3px;width:20.900px;height:20.200px"></div>
<svg class="a" style="left:384.0px;top:9.0px" width="9.500" height="9.500" viewBox="0 0 9 9"><circle cx="3.500" cy="3.500" r="2.600" fill="none" stroke="#c9c9c9" stroke-width="1.200"/><path d="M5.500,5.500 L8.300,8.300" stroke="#c9c9c9" stroke-width="1.300"/></svg>
<div class="btn" style="left:403.0px;top:3px;width:20.800px;height:20.200px"></div>
<svg class="a" style="left:410.2px;top:10.2px" width="6.400" height="7" viewBox="0 0 6.400 7"><g fill="#c9c9c9"><rect x="0" y="0" width="6.400" height="1.100"/><rect x="0" y="2.800" width="6.400" height="1.100"/><rect x="0" y="5.600" width="6.400" height="1.100"/></g></svg>
<div class="a" style="left:438.8px;top:14.5px;width:5.500px;height:2px;background:#f2f2f2"></div>
<svg class="a" style="left:462.8px;top:11.0px" width="5.400" height="5.400" viewBox="0 0 5 5"><path d="M0.400,0.400 L4.600,4.600 M4.600,0.400 L0.400,4.600" stroke="#f6f6f6" stroke-width="1.400"/></svg>
<span class="tx m" id="t24" style="left:1.30px;top:30px;font-size:9.77px;color:#e4e4e4;transform:scaleX(1.0003);">To run a command as administrator (user "root"), use "sudo &lt;command&gt;".</span><span class="tx m" id="t25" style="left:1.30px;top:42px;font-size:9.77px;color:#e4e4e4;transform:scaleX(1.0003);">See "man sudo_root" for details.</span><span class="tx m b" id="t26" style="left:1.30px;top:65px;font-size:9.77px;color:#58a80f;transform:scaleX(1.0002);">pop-os@pop-os</span><span class="tx m" id="t27" style="left:77.51px;top:65px;font-size:9.77px;color:#e4e4e4;transform:scaleX(0.9978);">:</span><span class="tx m b" id="t28" style="left:83.37px;top:65px;font-size:9.77px;color:#3f74b8;transform:scaleX(0.9978);">~</span><span class="tx m" id="t29" style="left:89.23px;top:65px;font-size:9.77px;color:#e4e4e4;transform:scaleX(0.9978);">$</span>
<div class="a" style="left:100.0px;top:63.2px;width:7px;height:12.800px;border:1px solid #e6e6e6"></div>
<div class="a" style="left:472.3px;top:28.200px;width:5.500px;height:282.500px;background:#2c2a2a"></div>
<div class="a" style="left:473.4px;top:29.500px;width:3.500px;height:279px;background:#565656;border-radius:1.500px"></div>
</div>
<div class="win" id="settings" style="left:816px;top:511px;width:542.600px;height:380.300px;background:#323232;box-shadow:0 2px 9px rgba(0,0,0,.5)">
<div class="hb" style="height:26px;background:#353535;border-bottom:1px solid #262323"></div>
<div class="a" style="left:120px;top:0;width:1px;height:25px;background:#2a2828"></div>
<div class="a" style="left:0;top:26px;width:120px;height:354.300px;background:#2a2a2a;border-radius:0 0 0 1px"></div>
<div class="a" style="left:3.8px;top:4.0px;width:19.200px;height:17.200px;background:#3e3e3e;border-radius:2px"></div>
<svg class="a" style="left:9.0px;top:8.3px" width="9" height="9" viewBox="0 0 9 9"><circle cx="3.500" cy="3.500" r="2.600" fill="none" stroke="#f0f0f0" stroke-width="1.300"/><path d="M5.500,5.500 L8.300,8.300" stroke="#f0f0f0" stroke-width="1.400"/></svg>
<span class="tx b" id="t48" style="left:45.80px;top:9px;font-size:8.8px;color:#f2f2f2;transform:scaleX(0.8126);">Settings</span>
<div class="a" style="left:97.7px;top:4.0px;width:18.500px;height:17.200px;background:#3e3e3e;border-radius:2px"></div>
<svg class="a" style="left:103.8px;top:9.5px" width="6.200" height="6.600" viewBox="0 0 6.200 6.600"><g fill="#f0f0f0"><rect x="0" y="0" width="6.200" height="1.200"/><rect x="0" y="2.700" width="6.200" height="1.200"/><rect x="0" y="5.400" width="6.200" height="1.200"/></g></svg>
<div class="a" style="left:0;top:26.2px;width:120px;height:25px;background:#94ebeb"></div><svg class="a" style="left:7.80px;top:33.40px" width="8.8" height="8.8" viewBox="0 0 16 16"><path d="M8,14.500 L0.300,5 Q8,-1.500 15.700,5 Z" fill="#2c4a4c"/></svg><span class="tx" id="t31" style="left:23.30px;top:34px;font-size:8.4px;color:#0e1414;transform:scaleX(0.8294);">Wi-Fi</span><svg class="a" style="left:7.80px;top:58.70px" width="8.8" height="8.8" viewBox="0 0 16 16"><rect x="5" y="0.800" width="6" height="5" rx="0.800" fill="none" stroke="#c4c4c4" stroke-width="1.600"/><rect x="0.800" y="10" width="6" height="5" rx="0.800" fill="none" stroke="#c4c4c4" stroke-width="1.600"/><rect x="9.200" y="10" width="6" height="5" rx="0.800" fill="none" stroke="#c4c4c4" stroke-width="1.600"/><path d="M8,6 V8.200 M3.800,10 V8.200 H12.200 V10" fill="none" stroke="#c4c4c4" stroke-width="1.400"/></svg><span class="tx" id="t32" style="left:23.70px;top:59px;font-size:8.4px;color:#c9c9c9;transform:scaleX(0.8952);">Network</span><svg class="a" style="left:7.80px;top:83.60px" width="8.8" height="8.8" viewBox="0 0 16 16"><rect x="3" y="0.500" width="10" height="15" rx="5" fill="#c4c4c4"/><path d="M5.800,5.500 L10,10 L8,12 V4 L10,6 L5.800,10.500" fill="none" stroke="#2a2a2a" stroke-width="1.100"/></svg><span class="tx" id="t33" style="left:23.70px;top:84px;font-size:8.4px;color:#c9c9c9;transform:scaleX(0.9240);">Bluetooth</span><svg class="a" style="left:7.80px;top:109.40px" width="8.8" height="8.8" viewBox="0 0 16 16"><rect x="1" y="1" width="14" height="9.600" rx="1" fill="none" stroke="#c4c4c4" stroke-width="1.700"/><rect x="3" y="3" width="5" height="1.500" fill="#c4c4c4"/><rect x="2.500" y="12.800" width="11" height="2.200" fill="#c4c4c4"/></svg><span class="tx" id="t34" style="left:23.70px;top:110px;font-size:8.4px;color:#c9c9c9;transform:scaleX(0.8817);">Desktop</span><svg class="a" style="left:106.6px;top:110.0px" width="5" height="8.400" viewBox="0 0 5 8.400"><path d="M0.600,0.500 L4.300,4.200 L0.600,7.900" fill="none" stroke="#c8c8c8" stroke-width="1.100"/></svg><svg class="a" style="left:7.80px;top:134.10px" width="8.8" height="8.8" viewBox="0 0 16 16"><path d="M5,3 H15 V11 H11 L9,13.500 V11 H5 Z" fill="#c4c4c4" opacity=".75"/><circle cx="3.800" cy="5.200" r="3.200" fill="#c4c4c4"/></svg><span class="tx" id="t35" style="left:23.70px;top:134px;font-size:8.4px;color:#c9c9c9;transform:scaleX(0.9337);">Notifications</span><svg class="a" style="left:7.80px;top:159.60px" width="8.8" height="8.8" viewBox="0 0 16 16"><rect x="1" y="1.200" width="5.800" height="5.600" fill="none" stroke="#c4c4c4" stroke-width="1.700"/><rect x="9.200" y="1.200" width="5.800" height="5.600" fill="none" stroke="#c4c4c4" stroke-width="1.700"/><rect x="1" y="9.400" width="5.800" height="5.600" fill="none" stroke="#c4c4c4" stroke-width="1.700"/><rect x="9.200" y="9.400" width="5.800" height="5.600" fill="none" stroke="#c4c4c4" stroke-width="1.700"/></svg><span class="tx" id="t36" style="left:23.30px;top:160px;font-size:8.4px;color:#c9c9c9;transform:scaleX(0.9298);">Applications</span><svg class="a" style="left:106.6px;top:160.2px" width="5" height="8.400" viewBox="0 0 5 8.400"><path d="M0.600,0.500 L4.300,4.200 L0.600,7.900" fill="none" stroke="#c8c8c8" stroke-width="1.100"/></svg><svg class="a" style="left:7.80px;top:184.60px" width="8.8" height="8.8" viewBox="0 0 16 16"><path d="M1.500,1.500 H14.500 V8.500 Q14.500,13 8,15 Q1.500,13 1.500,8.500 Z" fill="none" stroke="#c4c4c4" stroke-width="1.700"/><circle cx="8" cy="5.600" r="1.700" fill="#c4c4c4"/><path d="M4.600,11 Q8,7.400 11.400,11 Z" fill="#c4c4c4"/></svg><span class="tx" id="t37" style="left:23.70px;top:185px;font-size:8.4px;color:#c9c9c9;transform:scaleX(0.8155);">Privacy</span><svg class="a" style="left:106.6px;top:185.2px" width="5" height="8.400" viewBox="0 0 5 8.400"><path d="M0.600,0.500 L4.300,4.200 L0.600,7.900" fill="none" stroke="#c8c8c8" stroke-width="1.100"/></svg><svg class="a" style="left:7.80px;top:210.10px" width="8.8" height="8.8" viewBox="0 0 16 16"><circle cx="8" cy="8" r="2.700" fill="none" stroke="#c4c4c4" stroke-width="1.600"/><path d="M10.700,5.300 V9.300 Q10.900,11 12.600,10.800 Q14.800,10.200 14.600,7.600 Q14.200,1.600 8,1.400 Q1.600,1.600 1.400,8 Q1.600,14.400 8,14.600 Q10.600,14.600 12.200,13.400" fill="none" stroke="#c4c4c4" stroke-width="1.500"/></svg><span class="tx" id="t38" style="left:23.70px;top:210px;font-size:8.4px;color:#c9c9c9;transform:scaleX(0.8987);">Online Accounts</span><svg class="a" style="left:7.80px;top:234.90px" width="8.8" height="8.8" viewBox="0 0 16 16"><circle cx="12.600" cy="3" r="2.500" fill="#c4c4c4"/><circle cx="3.200" cy="8" r="2.500" fill="#c4c4c4"/><circle cx="12.600" cy="13" r="2.500" fill="#c4c4c4"/><path d="M12.600,3 L3.200,8 L12.600,13" fill="none" stroke="#c4c4c4" stroke-width="1.500"/></svg><span class="tx" id="t39" style="left:23.70px;top:235px;font-size:8.4px;color:#c9c9c9;transform:scaleX(0.8693);">Sharing</span><svg class="a" style="left:7.80px;top:259.40px" width="8.8" height="8.8" viewBox="0 0 16 16"><path d="M1,9.800 L13,4.200 V9.800 Z" fill="#c4c4c4"/><rect x="1" y="11.500" width="12" height="1.600" fill="#c4c4c4"/><rect x="14" y="4.200" width="1.600" height="8.900" fill="#c4c4c4"/></svg><span class="tx" id="t40" style="left:23.70px;top:260px;font-size:8.4px;color:#c9c9c9;transform:scaleX(0.8588);">Sound</span><svg class="a" style="left:7.80px;top:284.50px" width="8.8" height="8.8" viewBox="0 0 16 16"><circle cx="8" cy="8" r="7.300" fill="#c4c4c4"/><path d="M9,3 L5,8.800 H7.800 L7,13 L11,7.200 H8.200 Z" fill="#2a2a2a"/></svg><span class="tx" id="t41" style="left:23.70px;top:285px;font-size:8.4px;color:#c9c9c9;transform:scaleX(0.8589);">Power</span><svg class="a" style="left:7.80px;top:309.50px" width="8.8" height="8.8" viewBox="0 0 16 16"><rect x="1" y="1" width="14" height="9.600" rx="1" fill="none" stroke="#c4c4c4" stroke-width="1.700"/><path d="M3,9 V4.500 L8.500,9 Z" fill="#c4c4c4"/><rect x="4" y="12.800" width="10.500" height="2.200" fill="#c4c4c4"/></svg><span class="tx" id="t42" style="left:23.70px;top:310px;font-size:8.4px;color:#c9c9c9;transform:scaleX(0.8719);">Displays</span><svg class="a" style="left:7.80px;top:334.50px" width="8.8" height="8.8" viewBox="0 0 16 16"><rect x="3.500" y="0.500" width="9" height="15" rx="4.500" fill="#c4c4c4"/><rect x="7.400" y="2.500" width="1.200" height="3.800" fill="#2a2a2a"/></svg><span class="tx" id="t43" style="left:23.70px;top:335px;font-size:8.4px;color:#c9c9c9;transform:scaleX(0.8889);">Mouse &amp; Touchpad</span><svg class="a" style="left:7.80px;top:359.50px" width="8.8" height="8.8" viewBox="0 0 16 16"><rect x="0.800" y="2.300" width="14.400" height="11.400" rx="1.200" fill="none" stroke="#c4c4c4" stroke-width="1.700"/><path d="M3.500,5.500 H5 M7.200,5.500 H8.800 M11,5.500 H12.500 M4,10.300 H12" stroke="#c4c4c4" stroke-width="1.600" fill="none"/></svg><span class="tx" id="t44" style="left:23.70px;top:360px;font-size:8.4px;color:#c9c9c9;transform:scaleX(0.8784);">Keyboard</span><div class="a" style="left:0;top:149.8px;width:120px;height:1px;background:#323232"></div><div class="a" style="left:0;top:250.3px;width:120px;height:1px;background:#323232"></div>
<span class="tx b" id="t49" style="left:322.70px;top:4px;font-size:8.6px;color:#f2f2f2;transform:scaleX(0.7976);">Wi-Fi</span>
<div class="a" style="left:439.0px;top:5.7px;width:29.200px;height:14.400px;border-radius:7.200px;background:#f9ae58"></div>
<div class="a" style="left:455.0px;top:6.9px;width:12px;height:12px;border-radius:6px;background:#343232"></div>
<div class="a" style="left:472.0px;top:4.2px;width:18.900px;height:16.800px;background:#3e3e3e;border-radius:2px"></div>
<svg class="a" style="left:480.4px;top:8.3px" width="2" height="9" viewBox="0 0 2 9"><g fill="#f2f2f2"><rect x="0.200" y="0" width="1.600" height="1.700"/><rect x="0.200" y="3.600" width="1.600" height="1.700"/><rect x="0.200" y="7.200" width="1.600" height="1.700"/></g></svg>
<div class="a" style="left:506.0px;top:13.8px;width:4.500px;height:1.300px;background:#f2f2f2"></div>
<div class="a" style="left:524.2px;top:6.9px;width:11.600px;height:11.600px;border-radius:5.800px;background:#f08c24"></div>
<svg class="a" style="left:527.7px;top:10.4px" width="4.600" height="4.600" viewBox="0 0 5 5"><path d="M0.500,0.500 L4.500,4.500 M4.500,0.500 L0.500,4.500" stroke="#fdf3e6" stroke-width="1.300"/></svg>
<div class="a" style="left:170.1px;top:44.0px;width:323px;height:35.200px;background:#2a2a2a"></div>
<span class="tx b" id="t50" style="left:181.60px;top:52px;font-size:8.3px;color:#e6e6e6;transform:scaleX(0.8413);">Airplane Mode</span>
<span class="tx" id="t51" style="left:181.60px;top:63px;font-size:7px;color:#a2a2a2;transform:scaleX(0.9274);">Disables Wi-Fi, Bluetooth and mobile broadband</span>
<div class="a" style="left:452.3px;top:54.2px;width:29.200px;height:14.800px;border-radius:7.400px;background:#6b6b6b;border:1px solid #7a7a7a"></div>
<div class="a" style="left:453.5px;top:55.5px;width:12.200px;height:12.200px;border-radius:6.100px;background:#3a3a3a"></div>
<span class="tx b" id="t52" style="left:170.10px;top:97px;font-size:8.3px;color:#e6e6e6;transform:scaleX(0.8438);">Visible Networks</span>
<div class="a" style="left:170.1px;top:113.0px;width:323px;height:78.200px;background:#2a2a2a"></div>
<svg class="a" style="left:178.30px;top:121.50px" width="8.8" height="8.8" viewBox="0 0 16 16"><path d="M8,13 L0.300,4.600 Q8,-1.600 15.700,4.600 Z" fill="#cdcdcd" transform="translate(8,13) scale(1) translate(-8,-13)"/></svg><span class="tx" id="t45" style="left:193.60px;top:123px;font-size:8.2px;color:#cfcfcf;transform:scaleX(0.8871);">Redmi</span><svg class="a" style="left:443.50px;top:121.80px" width="8.4" height="8.4" viewBox="0 0 16 16"><path d="M4.500,7 V4.800 Q4.500,1.200 8,1.200 Q11.500,1.200 11.500,4.800 V7" fill="none" stroke="#c4c4c4" stroke-width="1.900"/><rect x="2.300" y="7" width="11.400" height="8" rx="1.200" fill="#c4c4c4"/></svg><div class="a" style="left:177.0px;top:139.0px;width:316px;height:1px;background:#2f2f2f"></div><svg class="a" style="left:178.30px;top:147.30px" width="8.8" height="8.8" viewBox="0 0 16 16"><path d="M8,13 L0.300,4.600 Q8,-1.600 15.700,4.600 Z" fill="#727272"/><path d="M8,13 L0.300,4.600 Q8,-1.600 15.700,4.600 Z" fill="#cdcdcd" transform="translate(8,13) scale(0.74) translate(-8,-13)"/></svg><span class="tx" id="t46" style="left:193.60px;top:149px;font-size:8.2px;color:#cfcfcf;transform:scaleX(0.9666);">Optilink 1</span><svg class="a" style="left:443.50px;top:147.60px" width="8.4" height="8.4" viewBox="0 0 16 16"><path d="M4.500,7 V4.800 Q4.500,1.200 8,1.200 Q11.500,1.200 11.500,4.800 V7" fill="none" stroke="#c4c4c4" stroke-width="1.900"/><rect x="2.300" y="7" width="11.400" height="8" rx="1.200" fill="#c4c4c4"/></svg><div class="a" style="left:177.0px;top:164.5px;width:316px;height:1px;background:#2f2f2f"></div><svg class="a" style="left:178.30px;top:172.60px" width="8.8" height="8.8" viewBox="0 0 16 16"><path d="M8,13 L0.300,4.600 Q8,-1.600 15.700,4.600 Z" fill="#727272"/><path d="M8,13 L0.300,4.600 Q8,-1.600 15.700,4.600 Z" fill="#cdcdcd" transform="translate(8,13) scale(0.55) translate(-8,-13)"/></svg><span class="tx" id="t47" style="left:193.60px;top:174px;font-size:8.2px;color:#cfcfcf;transform:scaleX(0.8193);">TP-LINK_E4C980</span><svg class="a" style="left:443.50px;top:172.90px" width="8.4" height="8.4" viewBox="0 0 16 16"><path d="M4.500,7 V4.800 Q4.500,1.200 8,1.200 Q11.500,1.200 11.500,4.800 V7" fill="none" stroke="#c4c4c4" stroke-width="1.900"/><rect x="2.300" y="7" width="11.400" height="8" rx="1.200" fill="#c4c4c4"/></svg>
</div>
<div id="dock"><svg class="a" style="left:0;top:0;overflow:hidden" width="1920" height="69" viewBox="0 0 1920 69">
<rect x="1198.20" y="1.40" width="67.60" height="67.60" rx="11" fill="#575353" /><rect x="668.50" y="15.70" width="16.70" height="16.70" rx="2.6" fill="#45b1c1"/><rect x="690.40" y="15.70" width="16.70" height="16.70" rx="2.6" fill="#45b1c1"/><rect x="668.50" y="37.60" width="16.70" height="16.70" rx="2.6" fill="#45b1c1"/><path d="M695.2,41.7 L704.6,51.1" stroke="#f5a623" stroke-width="4.300" stroke-linecap="round"/><path d="M693.6,40.1 L696.6,43.1" stroke="#f4f4f4" stroke-width="2.600"/><circle cx="688.300" cy="34.8" r="9.400" fill="#49b6c6" stroke="#fafafa" stroke-width="2.200"/><path d="M682.6,34.2 A6,6 0 0 1 687.3,28.9" fill="none" stroke="#a9e3ea" stroke-width="0.900" stroke-linecap="round"/><rect x="735.20" y="17.00" width="41.70" height="37.00" rx="2.8" fill="#3795a3" /><rect x="735.20" y="15.70" width="41.70" height="36.70" rx="2.8" fill="#47b4c4" /><rect x="738.10" y="18.60" width="19.80" height="14.30" rx="0.9" fill="#ececec" /><path d="M738.10,22.00 V19.50 Q738.10,18.60 739.00,18.60 H757.00 Q757.90,18.60 757.90,19.50 V22.00 Z" fill="#fbae17"/><rect x="761.25" y="21.40" width="12.60" height="8.70" rx="0.9" fill="#ececec" /><path d="M761.25,23.80 V22.30 Q761.25,21.40 762.15,21.40 H772.95 Q773.85,21.40 773.85,22.30 V23.80 Z" fill="#fbae17"/><rect x="746.10" y="36.30" width="19.90" height="14.60" rx="0.9" fill="#ececec" /><path d="M746.10,39.70 V37.20 Q746.10,36.30 747.00,36.30 H765.10 Q766.00,36.30 766.00,37.20 V39.70 Z" fill="#fbae17"/><rect x="804.10" y="15.70" width="10.90" height="10.90" rx="1.9" fill="#45b1c1"/><rect x="818.50" y="15.70" width="10.90" height="10.90" rx="1.9" fill="#f7dd6c"/><rect x="832.90" y="15.70" width="10.90" height="10.90" rx="1.9" fill="#45b1c1"/><rect x="804.10" y="29.60" width="10.90" height="10.90" rx="1.9" fill="#f7dd6c"/><rect x="818.50" y="29.60" width="10.90" height="10.90" rx="1.9" fill="#8fe6ea"/><rect x="832.90" y="29.60" width="10.90" height="10.90" rx="1.9" fill="#fbae17"/><rect x="804.10" y="43.60" width="10.90" height="10.90" rx="1.9" fill="#8fe6ea"/><rect x="818.50" y="43.60" width="10.90" height="10.90" rx="1.9" fill="#45b1c1"/><rect x="832.90" y="43.60" width="10.90" height="10.90" rx="1.9" fill="#f7dd6c"/><g transform="translate(864,7) scale(0.05)">
<defs>
<linearGradient id="ffb" x1="0.350" y1="0" x2="0.300" y2="1"><stop offset="0" stop-color="#ffb22a"/><stop offset=".35" stop-color="#ff8422"/><stop offset=".68" stop-color="#ff4438"/><stop offset=".88" stop-color="#fb2a62"/><stop offset="1" stop-color="#ec0f93"/></linearGradient>
<radialGradient id="ffy" gradientUnits="userSpaceOnUse" cx="790" cy="230" r="560"><stop offset="0" stop-color="#fff650"/><stop offset=".45" stop-color="#ffd83a" stop-opacity=".95"/><stop offset=".8" stop-color="#ffa62c" stop-opacity=".55"/><stop offset="1" stop-color="#ff8a2a" stop-opacity="0"/></radialGradient>
<linearGradient id="ffg" x1="0.600" y1="0" x2="0.350" y2="1"><stop offset="0" stop-color="#b93cff"/><stop offset=".5" stop-color="#8a4af3"/><stop offset="1" stop-color="#5649d2"/></linearGradient>
<linearGradient id="ffh" x1="0" y1="0" x2="1" y2="0"><stop offset="0" stop-color="#ff8a20" stop-opacity="0"/><stop offset=".45" stop-color="#ffa822"/><stop offset="1" stop-color="#ffc22c"/></linearGradient>
<clipPath id="ffc"><path id="ffp" d="M695,80 C740,130 800,200 880,282 L890,275 C900,300 905,320 915,345 C970,400 1005,480 1005,570 C1005,810 800,1000 560,1000 C310,1000 115,810 115,575 C115,450 170,340 295,225 C292,260 295,295 305,320 C330,290 370,265 410,250 C405,285 410,320 420,350 C460,330 500,318 545,305 C545,240 600,140 695,80 Z"/></clipPath>
</defs>
<use href="#ffp" fill="url(#ffb)"/>
<g clip-path="url(#ffc)"><rect x="100" y="60" width="920" height="950" fill="url(#ffy)"/></g>
<circle cx="552" cy="540" r="203" fill="url(#ffg)"/>
<path d="M640,333 C690,348 722,378 740,412 C702,396 672,400 646,412 Z" fill="#a53bf6"/>
<path d="M150,540 C190,440 300,400 420,348 C450,400 500,442 562,468 C556,500 520,520 470,526 C420,532 382,560 362,604 C330,570 250,545 150,540 Z" fill="url(#ffh)"/>
<path d="M225,478 C300,440 400,450 470,452 C520,455 545,462 562,468 C520,490 470,500 420,500 C350,500 290,500 225,478 Z" fill="#ffc52e" opacity=".85"/>
</g><path d="M940.0,19.5 V17.2 Q940.0,15.0 942.2,15.0 H955.5 Q956.8,15.0 957.8,16.0 L960.6,18.8 H978.4 Q980.0,18.8 980.4,20.5 V25.0 H940.0 Z" fill="#42b4c5"/><rect x="939.70" y="23.00" width="41.10" height="34.20" rx="2.6" fill="#666666" /><rect x="939.70" y="21.40" width="41.10" height="33.20" rx="2.6" fill="#a9a9a9" /><rect x="952.20" y="28.00" width="15.60" height="6.30" rx="0.8" fill="#878787" /><rect x="953.20" y="29.00" width="13.60" height="3.20" rx="0.4" fill="#fafafa" /><rect x="1007.10" y="25.00" width="41.65" height="29.00" rx="1.8" fill="#6b6b6b" /><rect x="1007.10" y="22.10" width="41.65" height="28.90" rx="1.8" fill="#d4d4d4" /><rect x="1008.90" y="23.90" width="38.05" height="25.30" rx="0.8" fill="#3c3c3c" /><clipPath id="rk"><rect x="1075.900" y="19" width="40.300" height="36" rx="2.200"/></clipPath><g clip-path="url(#rk)"><rect x="1075.90" y="19.00" width="40.30" height="36.00" rx="0" fill="#fbb562" /><rect x="1075.90" y="36.90" width="40.30" height="18.10" rx="0" fill="#f8cd6a" /><rect x="1075.90" y="48.70" width="40.30" height="6.30" rx="0" fill="#4a3f3c" /><rect x="1075.90" y="19.00" width="9.20" height="36.00" rx="0" fill="#a89f9b" /></g><circle cx="1080.500" cy="23.3" r="1.200" fill="#8b827e"/><circle cx="1080.500" cy="29.7" r="1.200" fill="#8b827e"/><circle cx="1080.500" cy="35.5" r="1.200" fill="#8b827e"/><circle cx="1080.500" cy="41.5" r="1.200" fill="#8b827e"/><circle cx="1080.500" cy="47.5" r="1.200" fill="#8b827e"/><rect x="1079.40" y="28.40" width="17.60" height="2.60" rx="1.2" fill="#7d7470" /><path d="M1096.0,35.5 Q1092.0,39.0 1089.6,52.5 L1094.6,43.5 L1096.5,42.0 Z" fill="#e6e6ea"/><path d="M1104.6,35.5 Q1108.6,39.0 1111.4,52.5 L1106.0,43.5 L1104.0,42.0 Z" fill="#e6e6ea"/><path d="M1100.3,13.6 Q1104.8,22.0 1104.8,32.0 V45.0 H1095.8 V32.0 Q1095.8,22.0 1100.3,13.6 Z" fill="#fdfdfd"/><rect x="1097.60" y="45.00" width="5.40" height="2.60" rx="0" fill="#c9c9cf" /><circle cx="1100.300" cy="20.3" r="1.600" fill="#3aa7b8"/><rect x="1097.40" y="37.60" width="5.80" height="1.00" rx="0.4" fill="#f7b955" /><rect x="1097.80" y="39.80" width="5.00" height="0.90" rx="0.4" fill="#f7b955" /><rect x="1147.50" y="16.00" width="32.80" height="43.00" rx="2.6" fill="#6e6e6e" /><rect x="1147.50" y="13.70" width="32.80" height="42.10" rx="2.6" fill="#b1b1b1" /><path d="M1152.4,41.2 V29.4 A11.800,11.800 0 1 1 1164.2,41.2 Z" fill="#474747"/><circle cx="1164.200" cy="29.4" r="5.900" fill="#a4a4a4"/><circle cx="1174.900" cy="46.2" r="12.600" fill="#2f8b99"/><circle cx="1174.900" cy="44.6" r="12.600" fill="#40b0c1"/><path d="M1173.2,36.4 H1176.7 V42.3 H1179.4 L1175.0,48.2 L1170.5,42.3 H1173.2 Z" fill="#fff"/><rect x="1169.20" y="49.80" width="11.60" height="2.20" rx="0" fill="#fff" /><rect x="1212.80" y="19.00" width="38.30" height="34.80" rx="2.4" fill="#6b6766" /><rect x="1212.80" y="16.00" width="38.30" height="34.90" rx="2.4" fill="#d5d5d5" /><path d="M1229.04,25.56 L1229.41,22.21 L1234.79,22.21 L1235.16,25.56 L1237.62,26.97 L1240.70,25.63 L1243.40,30.29 L1240.68,32.28 L1240.68,35.12 L1243.40,37.11 L1240.70,41.77 L1237.62,40.43 L1235.16,41.84 L1234.79,45.19 L1229.41,45.19 L1229.04,41.84 L1226.58,40.43 L1223.50,41.77 L1220.80,37.11 L1223.52,35.12 L1223.52,32.28 L1220.80,30.29 L1223.50,25.63 L1226.58,26.97 Z" fill="#3f3835" stroke="#3f3835" stroke-width="0.800" stroke-linejoin="round"/><circle cx="1232.1" cy="33.7" r="8.800" fill="#3f3835"/><circle cx="1232.1" cy="33.7" r="3.500" fill="#d5d5d5"/><circle cx="960" cy="65.2" r="2" fill="#fafafa"/><circle cx="1027.9" cy="65.2" r="2" fill="#fafafa"/><circle cx="1232.1" cy="65.2" r="2" fill="#fafafa"/>
</svg>
<span class="tx m" id="t53" style="left:1014.70px;top:27px;font-size:10.5px;color:#f4f4f4;transform:scaleX(0.9041);">$_</span>
</div>

</div>
</body>
</html>
